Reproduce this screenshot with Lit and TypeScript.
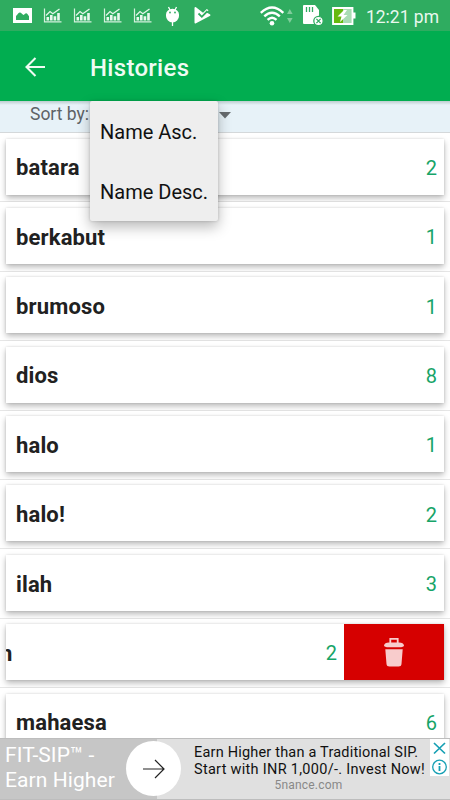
import { LitElement, html, css, svg } from "lit";
import { customElement, property } from "lit/decorators.js";

interface Entry {
  name: string;
  count: number;
  swiped?: boolean;
}

const ENTRIES: Entry[] = [
  { name: "batara", count: 2 },
  { name: "berkabut", count: 1 },
  { name: "brumoso", count: 1 },
  { name: "dios", count: 8 },
  { name: "halo", count: 1 },
  { name: "halo!", count: 2 },
  { name: "ilah", count: 3 },
  { name: "n", count: 2, swiped: true },
  { name: "mahaesa", count: 6 },
];

const chartIcon = svg`
  <path d="M1.500 .5v13.300H18.500" fill="none" stroke="#d4f0dd" stroke-width="1.200"/>
  <path d="M3 7.500 7 3.600 9.800 5.800 16.500 1" fill="none" stroke="#e4f6ea" stroke-width="1.300"/>
  <path d="M3.500 9h2.600v3.500H3.500zM7 7h2.600v5.500H7zM10.600 8.300h2.600v4.200h-2.600zM14.200 5h2.600v7.500h-2.600z" fill="#e9f8ee"/>`;

@customElement("status-bar")
export class StatusBar extends LitElement {
  static styles = css`
    :host {
      display: flex;
      align-items: center;
      height: 31px;
      box-sizing: border-box;
      padding: 0 11px 0 13px;
      background: #2fac60;
      color: #e9f8ee;
      font: 17.500px Roboto, sans-serif;
    }
    svg {
      display: block;
      flex: none;
    }
    .photo { margin-right: 11px; }
    .chart { margin-right: 11px; }
    .android { margin-left: 2px; margin-right: 14px; }
    .spacer { flex: 1; }
    .wifi { margin-right: 10px; }
    .sd { margin-right: 8px; }
    .battery { margin-right: 10px; }
    .time { padding-top: 2px; white-space: nowrap; }
  `;

  render() {
    return html`
      <svg class="photo" width="19" height="15" viewBox="0 0 19 15">
        <path fill="#fff" d="M0 0h19v15H0z"/>
        <path fill="#2fac60" d="M3 12V8C4.500 7 5 4.800 6.700 4.600 8.300 4.500 9 6.500 10.500 7 12 6 12.600 4.800 13.700 5.400 15 6 15 7.500 16 8v4z"/>
      </svg>
      ${[0, 1, 2, 3].map(
        () => html`<svg class="chart" width="19" height="15" viewBox="0 0 19 15">${chartIcon}</svg>`
      )}
      <svg class="android" width="15" height="20" viewBox="0 0 15 20">
        <path d="M3.500 1 5 4M11.500 1 10 4M7.500 15v5" stroke="#fff" stroke-width="1.300" fill="none"/>
        <path d="M1 8.500a6.500 5.800 0 0 1 13 0V10a6.500 6.500 0 0 1-13 0z" fill="#fff"/>
        <circle cx="5" cy="6.500" r=".9" fill="#2fac60"/><circle cx="10" cy="6.500" r=".9" fill="#2fac60"/>
      </svg>
      <svg width="17" height="17" viewBox="0 0 17 17">
        <path d="M1.500 0Q.5 0 .5 1v14.500Q.5 17 2 16.300L15.800 9Q17.200 8 15.800 7.200L12.500 5.500l2-2.300L12.800 2 9 5.800 2 .2z" fill="#fff"/>
        <path d="M4.500 6.500 7.800 9.800 13.500 4" stroke="#2fac60" stroke-width="1.800" fill="none"/>
      </svg>
      <span class="spacer"></span>
      <svg class="wifi" width="33" height="20" viewBox="0 0 33 20">
        <g fill="none" stroke="#fff" stroke-width="2.400">
          <path d="M.8 6.800Q12 -4 23.300 6.800"/>
          <path d="M4.300 10.300Q12 3 19.800 10.300"/>
          <path d="M7.600 13.800Q12 9.500 16.500 13.800"/>
        </g>
        <circle cx="12" cy="17.300" r="2.300" fill="#fff"/>
        <path d="m29.800 3 2.800 5H27zM29.800 17l2.800-5H27z" fill="#7fcd9b"/>
      </svg>
      <svg class="sd" width="21" height="21" viewBox="0 0 21 21">
        <path d="M1 0h11l4 5v14H1q-1 0-1-1V1q0-1 1-1z" fill="#fff"/>
        <path d="M3.500 2v5M6.500 2v5M9.500 2v5" stroke="#2fac60" stroke-width="1.300"/>
        <circle cx="15.500" cy="16" r="4.700" fill="#fff" stroke="#2fac60" stroke-width="1.300"/>
        <path d="m13.400 13.900 4.200 4.200m0-4.200-4.200 4.200" stroke="#2fac60" stroke-width="1.300"/>
      </svg>
      <svg class="battery" width="24" height="18" viewBox="0 0 24 18">
        <path d="M21 5.500h2.500v6H21z" fill="#fff"/>
        <path d="M1 1h19.500v16H1z" fill="#a9dcb4" stroke="#fff" stroke-width="1.800"/>
        <path d="M2 2h9v14H2z" fill="#66b90e"/>
        <path d="M12 3 5.500 9.500h4L8 15l7.500-7H11.500L15 3z" fill="#fff"/>
      </svg>
      <span class="time">12:21 pm</span>
    `;
  }
}

@customElement("history-row")
export class HistoryRow extends LitElement {
  @property({ attribute: false }) entry!: Entry;

  static styles = css`
    :host {
      display: block;
      box-sizing: border-box;
      height: 69.4px;
      padding: 5.500px 6px 0;
      border-bottom: 1px solid #e6e6e6;
      background: #fff;
    }
    .card {
      height: 56px;
      display: flex;
      overflow: hidden;
      background: #fff;
      box-shadow: 0 3px 6px rgba(0, 0, 0, 0.28), 0 0 2px rgba(0, 0, 0, 0.12);
    }
    .front {
      flex: 0 0 100%;
      display: flex;
      align-items: center;
      justify-content: space-between;
      box-sizing: border-box;
      padding: 2.500px 7px 0 10px;
      font-family: Roboto, sans-serif;
    }
    .swiped { justify-content: flex-end; }
    .name {
      color: #212121;
      font-size: 22px;
      font-weight: 700;
      letter-spacing: 0.15px;
    }
    .count {
      color: #17a468;
      font-size: 20px;
    }
    .swiped .name { padding-left: 84px; }
    .delete {
      flex: 0 0 100px;
      display: flex;
      align-items: center;
      justify-content: center;
      background: #d60000;
    }
  `;

  render() {
    const { name, count, swiped } = this.entry;
    return html`
      <div class="card ${swiped ? "swiped" : ""}">
        <div class="front"><span class="name">${name}</span><span class="count">${count}</span></div>
        ${swiped
          ? html`<div class="delete">
              <svg width="22" height="30" viewBox="0 0 22 30">
                <path d="M7.300 6V1.900h7.400V6" fill="none" stroke="#f8cccc" stroke-width="1.800"/>
                <path d="M1 8.500Q1.500 5.500 6 5.500h10q4.500 0 5 3Q21 10.300 16 10.300H6Q1 10.300 1 8.500z" fill="#f8cccc"/>
                <path d="M2.300 12.200h17.400L18.500 27q-.2 2.500-3 2.500h-9q-2.800 0-3-2.500z" fill="#f8cccc"/>
              </svg>
            </div>`
          : null}
      </div>
    `;
  }
}

@customElement("ad-banner")
export class AdBanner extends LitElement {
  static styles = css`
    :host {
      display: flex;
      height: 62px;
      box-sizing: border-box;
      border-top: 1px solid #bdbdbd;
      border-bottom: 1px solid #bdbdbd;
      background: #e0e0e0;
      font-family: Roboto, sans-serif;
    }
    .headline {
      flex: 0 0 157px;
      box-sizing: border-box;
      padding: 4px 0 0 5px;
      background: #c6c6c6;
      color: #fff;
      font-size: 21px;
      letter-spacing: 0.08px;
      line-height: 25px;
      white-space: nowrap;
    }
    .go {
      flex: none;
      width: 55px;
      height: 55px;
      margin: 2px 0 0 -31px;
      border-radius: 50%;
      background: #fff;
      display: flex;
      align-items: center;
      justify-content: center;
    }
    .copy {
      flex: 1;
      min-width: 0;
      padding: 5px 0 0 13px;
      font-size: 14.500px;
      letter-spacing: 0.2px;
      line-height: 17px;
      color: #111;
      white-space: nowrap;
    }
    .second { letter-spacing: 0.29px; }
    .site {
      width: 229px;
      text-align: center;
      font-size: 12px;
      line-height: 14px;
      color: #888;
    }
    .choices {
      flex: none;
      width: 19px;
      height: 37px;
      margin-right: 1px;
      background: #fff;
    }
    .choices svg { display: block; }
  `;

  render() {
    return html`
      <div class="headline">FIT-SIP™ -<br />Earn Higher</div>
      <div class="go">
        <svg width="24" height="22" viewBox="0 0 24 22">
          <path d="M1 11h21M13 2l9 9-9 9" fill="none" stroke="#222" stroke-width="1.200"/>
        </svg>
      </div>
      <div class="copy">
        <div>Earn Higher than a Traditional SIP.</div>
        <div class="second">Start with INR 1,000/-. Invest Now!</div>
        <div class="site">5nance.com</div>
      </div>
      <div class="choices">
        <svg width="19" height="37" viewBox="0 0 19 37" fill="none" stroke="#16a0b4">
          <path d="m4 4 11 10.500M15 4 4 14.500" stroke-width="1.700"/>
          <circle cx="9.500" cy="28" r="6.800" stroke-width="1.300"/>
          <path d="M9.500 24v1.900M9.500 27v5" stroke-width="1.800"/>
        </svg>
      </div>
    `;
  }
}

@customElement("app-root")
export class AppRoot extends LitElement {
  static styles = css`
    :host {
      display: flex;
      flex-direction: column;
      width: 450px;
      height: 800px;
      overflow: hidden;
      background: #fff;
      font-family: Roboto, sans-serif;
    }
    status-bar, .toolbar, .sort, ad-banner { flex: none; }
    .toolbar {
      height: 70px;
      display: flex;
      align-items: center;
      box-sizing: border-box;
      padding: 2px 0 0 25px;
      background: #01ad50;
    }
    .title {
      margin: 1px 0 0 45px;
      color: #effbf3;
      font-size: 24px;
      font-weight: 500;
      letter-spacing: 0.3px;
    }
    .sort {
      position: relative;
      z-index: 2;
      height: 32px;
      box-sizing: border-box;
      display: flex;
      padding: 3px 0 0 30px;
      border-bottom: 1px solid #d4d8da;
      background: linear-gradient(#bccdcf, #e7f2f8 4px);
      color: #5e6366;
      font-size: 17.500px;
      line-height: 20px;
    }
    .caret { margin: 8px 0 0 130px; }
    .menu {
      position: absolute;
      left: 90px;
      top: 0;
      width: 128px;
      height: 120px;
      border-radius: 2px;
      background: #eee;
      box-shadow: 0 6px 14px rgba(0, 0, 0, 0.28), 0 0 3px rgba(0, 0, 0, 0.18);
      color: #111;
      font-size: 20px;
    }
    .option {
      height: 60px;
      box-sizing: border-box;
      padding: 1px 0 0 10px;
      line-height: 60px;
      white-space: nowrap;
    }
    .list {
      flex: 1;
      min-height: 0;
      overflow: hidden;
    }
  `;

  render() {
    return html`
      <status-bar></status-bar>
      <header class="toolbar">
        <svg width="20" height="20" viewBox="0 0 20 20">
          <path d="M20 10H2M10.500 1 1.500 10l9 9" fill="none" stroke="#effbf3" stroke-width="2.100"/>
        </svg>
        <h1 class="title">Histories</h1>
      </header>
      <div class="sort">
        <span>Sort by:</span>
        <svg class="caret" width="12" height="7" viewBox="0 0 12 7"><path d="M0 0h12L6 6.500z" fill="#666b6e"/></svg>
        <div class="menu">
          <div class="option">Name Asc.</div>
          <div class="option">Name Desc.</div>
        </div>
      </div>
      <main class="list">
        ${ENTRIES.map((entry) => html`<history-row .entry=${entry}></history-row>`)}
      </main>
      <ad-banner></ad-banner>
    `;
  }
}
